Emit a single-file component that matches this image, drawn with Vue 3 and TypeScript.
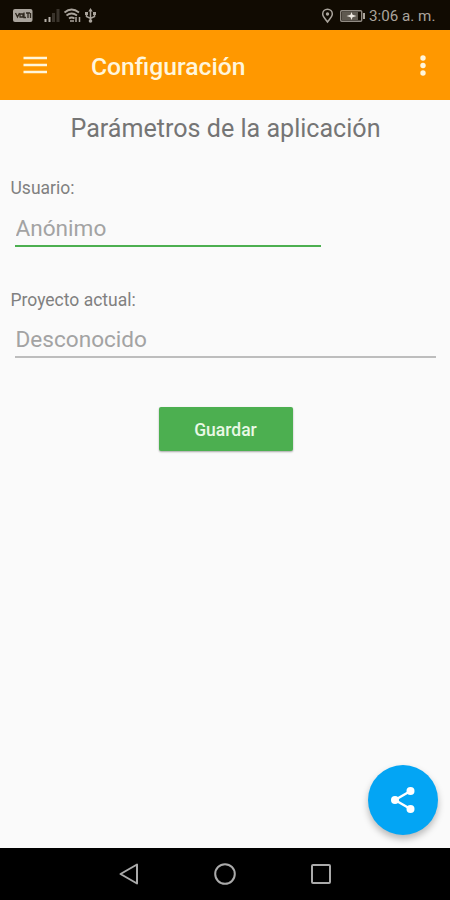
<script setup lang="ts">
import { ref } from 'vue'

const user = ref('')
const project = ref('')
</script>

<template>
  <div class="screen">
    <header class="status">
      <svg class="status-icons" width="90" height="30" viewBox="0 0 90 30">
        <rect x="3" y="9" width="19.500" height="13" rx="2" fill="#aaa49c" />
        <path d="M5.500 13l2 4 2-4M10 14h3v3h-3zM14 12.500v5h2M16 13h4M18 13v5M20.500 13v5" fill="none" stroke="#30291f" stroke-width="1.300" />
        <path d="M35.500 19v3M39.500 17v5" stroke="#b5afa7" stroke-width="2" />
        <path d="M43.500 13v9M48 9v13" stroke="#39332b" stroke-width="3" />
        <g fill="none" stroke="#aaa49c" stroke-width="1.800">
          <path d="M54.500 12.500Q61.500 6.500 69 12.500M56.500 15.500Q61.500 11.500 67 15.500M59 18.500Q61.500 16.500 64.500 18.500" />
          <path d="M60 21h4M66 17v5M69.500 17v5" stroke-width="1.500" />
        </g>
        <g fill="none" stroke="#aaa49c" stroke-width="1.500">
          <path d="M80.500 10v11M76.500 13v3.500l4 2 4-2V13" />
        </g>
        <path d="M80.500 8l2.200 3.500h-4.400zM75 12h3v3h-3zM83 12h3v3h-3z" fill="#aaa49c" />
        <circle cx="80.500" cy="21" r="1.800" fill="#aaa49c" />
      </svg>
      <span class="spacer"></span>
      <svg width="46" height="30" viewBox="0 0 46 30">
        <path d="M7.500 22C5 18.600 2.700 16.500 2.700 14a4.800 4.800 0 0 1 9.600 0c0 2.500-2.300 4.600-4.800 8z" fill="none" stroke="#aaa49c" stroke-width="1.500" />
        <circle cx="7.500" cy="14" r="1.700" fill="#aaa49c" />
        <rect x="20.700" y="10.700" width="21" height="10.600" rx="1" fill="none" stroke="#918b83" stroke-width="1.400" />
        <path d="M22 12h16v8H22z" fill="#5f5950" />
        <path d="M44 13v6" stroke="#aaa49c" stroke-width="2" />
        <path d="M26.500 16l4-1.200L31.500 12l1 2.800 4 1.200-4 1.200-1 2.800-1-2.800z" fill="#eee9e1" />
      </svg>
      <span class="clock">3:06 a. m.</span>
    </header>

    <div class="appbar">
      <button class="icon-button menu" aria-label="Menú">
        <svg width="24" height="18" viewBox="0 0 24 18">
          <path d="M.5 2h23.500M.5 9h23.500M.5 16h23.500" stroke="#fff6dc" stroke-width="2.600" />
        </svg>
      </button>
      <h1>Configuración</h1>
      <button class="icon-button more" aria-label="Más opciones">
        <svg width="8" height="24" viewBox="0 0 8 24">
          <g fill="#fff6dc">
            <circle cx="4" cy="5" r="2.700" />
            <circle cx="4" cy="12.500" r="2.700" />
            <circle cx="4" cy="20" r="2.700" />
          </g>
        </svg>
      </button>
    </div>

    <main>
      <h2>Parámetros de la aplicación</h2>
      <label class="user-label" for="user">Usuario:</label>
      <input id="user" v-model="user" class="user-input" placeholder="Anónimo" />
      <label class="project-label" for="project">Proyecto actual:</label>
      <input id="project" v-model="project" class="project-input" placeholder="Desconocido" />
      <button class="save">Guardar</button>
      <button class="fab" aria-label="Compartir">
        <svg width="26" height="28" viewBox="0 0 26 28">
          <path d="M20.500 5L5 14l15.500 9" fill="none" stroke="#fff" stroke-width="2.400" />
          <g fill="#fff">
            <circle cx="20.500" cy="5" r="4" />
            <circle cx="5" cy="14" r="4" />
            <circle cx="20.500" cy="23" r="4" />
          </g>
        </svg>
      </button>
    </main>

    <nav>
      <svg width="22" height="24" viewBox="0 0 22 24">
        <path d="M19 2.500v19L2.500 12z" />
      </svg>
      <svg width="24" height="24" viewBox="0 0 24 24">
        <circle cx="12" cy="12" r="9.800" />
      </svg>
      <svg width="22" height="22" viewBox="0 0 22 22">
        <rect x="2" y="2" width="18" height="18" rx="1" />
      </svg>
    </nav>
  </div>
</template>

<style>
body {
  margin: 0;
}
</style>

<style scoped>
.screen {
  width: 450px;
  height: 900px;
  display: flex;
  flex-direction: column;
  overflow: hidden;
  background: #fafafa;
  font-family: Roboto, sans-serif;
}
svg {
  display: block;
  flex: none;
}
button {
  border: 0;
  padding: 0;
  font-family: inherit;
}
.status {
  height: 30px;
  flex: none;
  display: flex;
  align-items: center;
  padding: 0 14px 0 10px;
  background: #110b02;
}
.spacer {
  flex: 1;
}
.clock {
  width: 67px;
  margin-left: 3px;
  padding-top: 2px;
  color: #aaa49c;
  font-size: 15.200px;
  line-height: 20px;
  white-space: nowrap;
}
.appbar {
  height: 70px;
  box-sizing: border-box;
  flex: none;
  display: flex;
  align-items: center;
  padding: 0 23px;
  background: #ff9800;
}
.icon-button {
  background: none;
}
h1 {
  flex: 1;
  margin: 4px 0 0 44px;
  color: #fff6dc;
  font-size: 24.700px;
  font-weight: 500;
  line-height: 30px;
}
main {
  flex: 1;
  display: flex;
  flex-direction: column;
  align-items: flex-start;
}
h2 {
  align-self: center;
  margin: 14px 0 0 1px;
  color: #757575;
  font-size: 25.100px;
  font-weight: 400;
  line-height: 30px;
}
label {
  margin-left: 10.500px;
  color: #808080;
  font-size: 17.500px;
  line-height: 20px;
}
.user-label {
  margin-top: 34px;
}
.project-label {
  margin-top: 43px;
}
input {
  box-sizing: border-box;
  height: 36px;
  margin: 12px 0 0 15px;
  padding: 1px 0 0 0.500px;
  border: 0;
  border-radius: 0;
  outline: 0;
  background: transparent;
  color: #424242;
  font-family: inherit;
  font-size: 22.600px;
}
input::placeholder {
  color: #a3a3a3;
}
.user-input {
  width: 306px;
  height: 37px;
  border-bottom: 2px solid #4caf50;
}
.project-input {
  width: 421px;
  border-bottom: 2px solid #bdbdbd;
}
.save {
  align-self: center;
  width: 134px;
  height: 44px;
  margin: 49px 0 0 1px;
  padding-top: 1px;
  border-radius: 2px;
  background: #4caf50;
  box-shadow: 0 1px 2px #0005;
  color: #e9f8e5;
  font-size: 17.500px;
  font-weight: 500;
}
.fab {
  align-self: flex-end;
  display: flex;
  align-items: center;
  justify-content: center;
  width: 70px;
  height: 70px;
  margin: auto 12px 13px 0;
  border-radius: 50%;
  background: #03a5f4;
  box-shadow: 0 4px 7px #0004;
}
nav {
  height: 52px;
  flex: none;
  display: flex;
  align-items: center;
  justify-content: space-between;
  padding: 0 118px;
  background: #000;
}
nav svg {
  fill: none;
  stroke: #aaa;
  stroke-width: 2;
  stroke-linejoin: round;
}
</style>
